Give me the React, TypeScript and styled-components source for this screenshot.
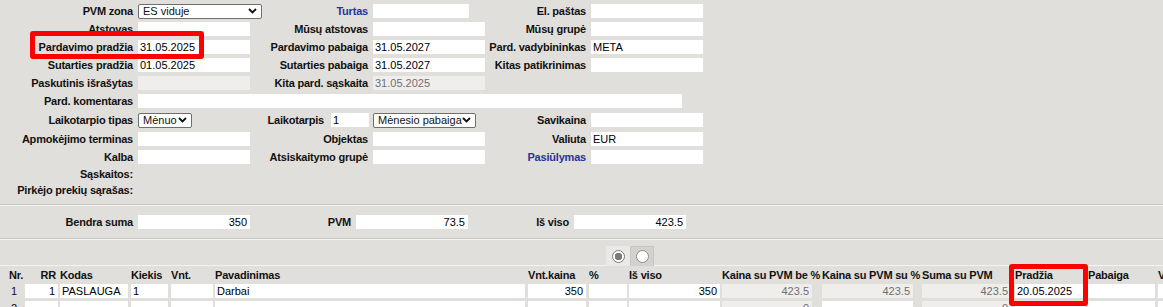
import React from "react";
import styled, { createGlobalStyle } from "styled-components";

const GlobalStyle = createGlobalStyle`
  html, body {
    margin: 0;
    padding: 0;
    background: #e1dfdc;
  }
  body {
    font-family: "Liberation Sans", Arial, sans-serif;
    font-size: 11px;
    color: #111;
  }
`;

const Page = styled.div`
  position: relative;
  width: 1163px;
  height: 307px;
  overflow: hidden;
`;

const Form = styled.div`
  display: flex;
  flex-direction: column;
  padding-top: 2px;
`;

const FormRow = styled.div<{ $h?: number }>`
  display: grid;
  grid-template-columns: 138px 117px 118px 116px 102px 112px;
  height: ${(p) => p.$h ?? 18}px;
  align-items: center;
`;

const Label = styled.div<{ $link?: boolean }>`
  text-align: right;
  padding-right: 5px;
  font-weight: bold;
  letter-spacing: -0.2px;
  white-space: nowrap;
  color: ${(p) => (p.$link ? "#27339f" : "#111")};
`;

const LabelGroup = styled.div`
  display: flex;
  justify-content: flex-end;
  align-items: center;
  gap: 7px;
  padding-right: 4px;
  font-weight: bold;
  letter-spacing: -0.2px;
`;

const Field = styled.input<{ $w?: number; $right?: boolean; $ro?: boolean }>`
  display: block;
  width: ${(p) => p.$w ?? 112}px;
  height: 14px;
  box-sizing: border-box;
  border: none;
  outline: none;
  margin: 0;
  padding: 0 3px 0 2px;
  font-family: inherit;
  font-size: 11px;
  font-weight: normal;
  letter-spacing: normal;
  text-align: ${(p) => (p.$right ? "right" : "left")};
  background: ${(p) => (p.$ro ? "#efeeed" : "#fff")};
  color: ${(p) => (p.$ro ? "#6f6f6f" : "#000")};
`;

const Wide = styled.div`
  grid-column: 2 / 7;
`;

const SelectBox = styled.div<{ $w: number }>`
  width: ${(p) => p.$w}px;
  height: 15px;
  box-sizing: border-box;
  border: 1px solid #6f6f6f;
  border-radius: 2px;
  background: #fff;
  display: flex;
  align-items: center;
  justify-content: space-between;
  padding: 0 4px 0 4px;
  font-size: 11px;
  white-space: nowrap;
`;

const Chevron = () => (
  <svg width="9" height="6" viewBox="0 0 9 6">
    <path d="M1 1 L4.5 4.5 L8 1" fill="none" stroke="#111" strokeWidth="1.9" />
  </svg>
);

const Select = ({ w, text }: { w: number; text: string }) => (
  <SelectBox $w={w}>
    <span>{text}</span>
    <Chevron />
  </SelectBox>
);

const TextRow = styled.div`
  display: grid;
  grid-template-columns: 138px;
  height: 16px;
  align-items: center;
`;

const Section = styled.div`
  border-top: 1px solid #c9c7c4;
  box-shadow: inset 0 1px 0 #f4f3f1;
`;

const Totals = styled(Section)`
  margin-top: 6px;
  height: 33px;
  display: grid;
  grid-template-columns: 138px 112px 106px 112px 106px 112px;
  align-items: center;
`;

const Toolbar = styled(Section)`
  height: 27px;
  box-sizing: border-box;
  padding: 7px 0 0 606px;
`;

const Segments = styled.div`
  display: flex;
  height: 20px;
`;

const Segment = styled.div<{ $on?: boolean }>`
  width: 24px;
  display: flex;
  align-items: center;
  justify-content: center;
  background: ${(p) => (p.$on ? "#eae9e7" : "#d4d2cf")};
  border: 1px solid ${(p) => (p.$on ? "#eae9e7" : "#c8c6c3")};
  border-bottom: none;
  box-sizing: border-box;
`;

const Radio = styled.span<{ $on?: boolean }>`
  width: 13px;
  height: 13px;
  box-sizing: border-box;
  border-radius: 50%;
  border: 1px solid ${(p) => (p.$on ? "#7c7c7c" : "#8a8a8a")};
  background: ${(p) =>
    p.$on ? "radial-gradient(circle, #7a7a7a 0 3.5px, #fff 4px)" : "#fff"};
`;

const Table = styled.div`
  border-top: 1px solid #f4f3f1;
`;

const TRow = styled.div<{ $head?: boolean }>`
  display: grid;
  grid-template-columns: 25px 35px 71px 40px 44px 313px 61px 40px 93px 100px 100px 93px 73px 70px 60px;
  height: ${(p) => (p.$head ? 18 : 17)}px;
  align-items: ${(p) => (p.$head ? "center" : "start")};
`;

const Head = styled.div<{ $right?: boolean; $w?: number; $pad?: number }>`
  font-weight: bold;
  letter-spacing: -0.2px;
  white-space: nowrap;
  text-align: ${(p) => (p.$right ? "right" : "left")};
  width: ${(p) => (p.$w ? `${p.$w}px` : "auto")};
  padding-left: ${(p) => p.$pad ?? 0}px;
`;

const Num = styled.div`
  padding-left: 11px;
  line-height: 14px;
`;

const Highlight = styled.div<{ $x: number; $y: number; $w: number; $h: number }>`
  position: absolute;
  left: ${(p) => p.$x}px;
  top: ${(p) => p.$y}px;
  width: ${(p) => p.$w}px;
  height: ${(p) => p.$h}px;
  box-sizing: border-box;
  border: 5px solid #ff0000;
  border-radius: 3px;
  pointer-events: none;
`;

type Cell = { v?: string; right?: boolean; ro?: boolean };

const widths = [33, 68, 37, 42, 310, 58, 38, 91, 90, 91, 89, 70, 67, 60];

const headers: { t: string; right?: boolean }[] = [
  { t: "RR", right: true },
  { t: "Kodas" },
  { t: "Kiekis" },
  { t: "Vnt." },
  { t: "Pavadinimas" },
  { t: "Vnt.kaina" },
  { t: "%" },
  { t: "Iš viso" },
  { t: "Kaina su PVM be %" },
  { t: "Kaina su PVM su %" },
  { t: "Suma su PVM" },
  { t: "Pradžia" },
  { t: "Pabaiga" },
  { t: "Vnt.svoris" },
];

const rows: { nr: string; cells: Cell[] }[] = [
  {
    nr: "1",
    cells: [
      { v: "1", right: true },
      { v: "PASLAUGA" },
      { v: "1" },
      {},
      { v: "Darbai" },
      { v: "350", right: true },
      {},
      { v: "350", right: true },
      { v: "423.5", right: true, ro: true },
      { v: "423.5", right: true, ro: true },
      { v: "423.5", right: true, ro: true },
      { v: "20.05.2025" },
      {},
      {},
    ],
  },
  {
    nr: "2",
    cells: [
      {},
      {},
      {},
      {},
      {},
      {},
      {},
      {},
      { v: "0", right: true, ro: true },
      {},
      { v: "0", right: true, ro: true },
      {},
      {},
      {},
    ],
  },
];

export default function App() {
  return (
    <Page>
      <GlobalStyle />
      <Form>
        <FormRow>
          <Label>PVM zona</Label>
          <Select w={124} text="ES viduje" />
          <Label $link>Turtas</Label>
          <Field $w={96} readOnly />
          <Label>El. paštas</Label>
          <Field readOnly />
        </FormRow>
        <FormRow>
          <Label>Atstovas</Label>
          <Field readOnly />
          <Label>Mūsų atstovas</Label>
          <Field readOnly />
          <Label>Mūsų grupė</Label>
          <Field readOnly />
        </FormRow>
        <FormRow>
          <Label>Pardavimo pradžia</Label>
          <Field readOnly defaultValue="31.05.2025" />
          <Label>Pardavimo pabaiga</Label>
          <Field readOnly defaultValue="31.05.2027" />
          <Label>Pard. vadybininkas</Label>
          <Field readOnly defaultValue="META" />
        </FormRow>
        <FormRow>
          <Label>Sutarties pradžia</Label>
          <Field readOnly defaultValue="01.05.2025" />
          <Label>Sutarties pabaiga</Label>
          <Field readOnly defaultValue="31.05.2027" />
          <Label>Kitas patikrinimas</Label>
          <Field readOnly />
        </FormRow>
        <FormRow>
          <Label>Paskutinis išrašytas</Label>
          <Field readOnly $ro />
          <Label>Kita pard. sąskaita</Label>
          <Field readOnly $ro defaultValue="31.05.2025" />
        </FormRow>
        <FormRow>
          <Label>Pard. komentaras</Label>
          <Wide>
            <Field readOnly $w={544} />
          </Wide>
        </FormRow>
        <FormRow $h={20}>
          <Label>Laikotarpio tipas</Label>
          <Select w={54} text="Mėnuo" />
          <LabelGroup>
            <span>Laikotarpis</span>
            <Field readOnly $w={38} defaultValue="1" />
          </LabelGroup>
          <Select w={103} text="Mėnesio pabaiga" />
          <Label>Savikaina</Label>
          <Field readOnly />
        </FormRow>
        <FormRow>
          <Label>Apmokėjimo terminas</Label>
          <Field readOnly />
          <Label>Objektas</Label>
          <Field readOnly />
          <Label>Valiuta</Label>
          <Field readOnly defaultValue="EUR" />
        </FormRow>
        <FormRow>
          <Label>Kalba</Label>
          <Field readOnly />
          <Label>Atsiskaitymo grupė</Label>
          <Field readOnly />
          <Label $link>Pasiūlymas</Label>
          <Field readOnly />
        </FormRow>
        <TextRow>
          <Label>Sąskaitos:</Label>
        </TextRow>
        <TextRow>
          <Label>Pirkėjo prekių sąrašas:</Label>
        </TextRow>
      </Form>

      <Totals>
        <Label>Bendra suma</Label>
        <Field readOnly $right defaultValue="350" />
        <Label>PVM</Label>
        <Field readOnly $right defaultValue="73.5" />
        <Label>Iš viso</Label>
        <Field readOnly $right defaultValue="423.5" />
      </Totals>

      <Toolbar>
        <Segments>
          <Segment $on>
            <Radio $on />
          </Segment>
          <Segment>
            <Radio />
          </Segment>
        </Segments>
      </Toolbar>

      <Table>
        <TRow $head>
          <Head $pad={9}>Nr.</Head>
          {headers.map((h, i) => (
            <Head key={h.t} $right={h.right} $w={h.right ? widths[i] - 2 : undefined}>
              {h.t}
            </Head>
          ))}
        </TRow>
        {rows.map((r) => (
          <TRow key={r.nr}>
            <Num>{r.nr}</Num>
            {r.cells.map((c, i) => (
              <Field
                key={i}
                readOnly
                $w={widths[i]}
                $right={c.right}
                $ro={c.ro}
                defaultValue={c.v ?? ""}
              />
            ))}
          </TRow>
        ))}
      </Table>

      <Highlight $x={30} $y={31} $w={174} $h={28} />
      <Highlight $x={1009} $y={264} $w={79} $h={42} />
    </Page>
  );
}
